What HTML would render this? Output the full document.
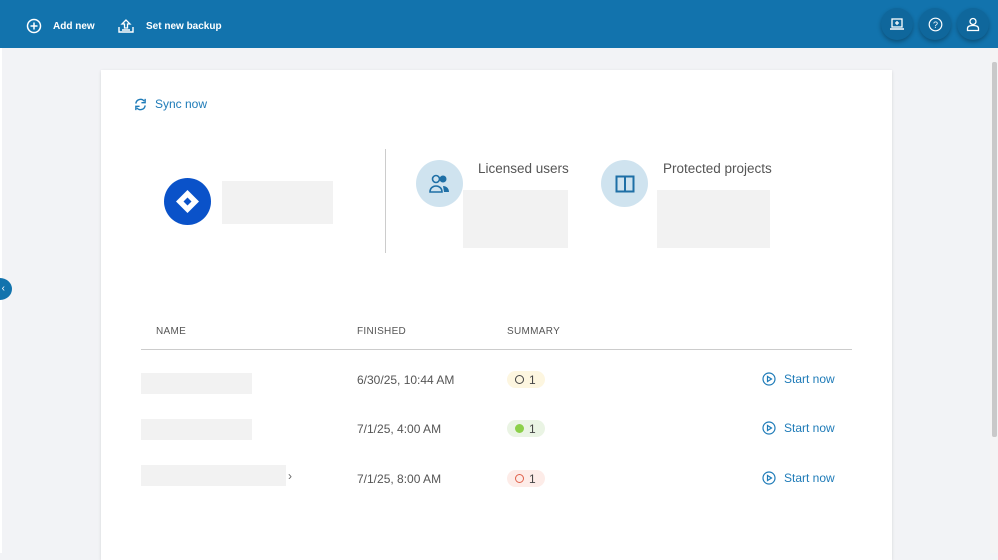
<!DOCTYPE html>
<html><head><meta charset="utf-8"><style>
*{box-sizing:border-box;margin:0;padding:0}
body{width:998px;height:553px;overflow:hidden;background:#f2f3f6;font-family:"Liberation Sans",sans-serif;position:relative;color:#444}
.top{position:absolute;left:0;top:0;width:998px;height:48px;background:#1273ad}
.tb{position:absolute;top:2px;height:48px;display:flex;align-items:center;color:#fff;font-size:10px;font-weight:bold}
.rc{position:absolute;top:8px;width:32px;height:32px;border-radius:50%;background:#0f679c;box-shadow:0 2px 4px rgba(0,0,0,.3);display:flex;align-items:center;justify-content:center}
.card{position:absolute;left:101px;top:70px;width:791px;height:490px;background:#fff;box-shadow:0 1px 3px rgba(0,0,0,.12)}
.blur{position:absolute;background:#f2f2f2}
.ab{position:absolute}
.hd{position:absolute;top:326px;font-size:10px;color:#555;letter-spacing:.3px}
.dt{position:absolute;font-size:12px;color:#555}
.pill{position:absolute;left:507px;width:38px;height:17px;border-radius:9px;font-size:12px;display:flex;align-items:center;padding-left:8px;gap:5px;color:#444}
.st{position:absolute;left:762px;font-size:12px;color:#1e7bb8;display:flex;align-items:center;gap:8px}
</style></head><body>
<div class="top"></div>
<div class="tb" style="left:26px"><svg width="16" height="16" viewBox="0 0 16 16"><circle cx="8" cy="8" r="6.5" fill="none" stroke="#fff" stroke-width="1.5"/><path d="M8 4.5v7M4.5 8h7" stroke="#fff" stroke-width="1.5"/></svg><span style="margin-left:11px">Add new</span></div>
<div class="tb" style="left:117px"><svg width="18" height="16" viewBox="0 0 18 16"><path d="M2 9v5h14V9M5 12h8" fill="none" stroke="#fff" stroke-width="1.4"/><path d="M9 2l-4 4h2.5v4h3V6H13z" fill="none" stroke="#fff" stroke-width="1.3"/></svg><span style="margin-left:11px">Set new backup</span></div>
<div class="rc" style="left:881px"><svg width="14" height="13" viewBox="0 0 14 13"><rect x="2" y="1" width="10" height="8" fill="none" stroke="#fff" stroke-width="1.3"/><path d="M7 3v4M5 5h4" stroke="#fff" stroke-width="1.3"/><path d="M0 11h14" stroke="#fff" stroke-width="1.5"/></svg></div>
<div class="rc" style="left:919px"><svg width="15" height="15" viewBox="0 0 15 15"><circle cx="7.5" cy="7.5" r="6.3" fill="none" stroke="#fff" stroke-width="1.2"/><text x="7.5" y="11" text-anchor="middle" font-size="9" fill="#fff" font-family="Liberation Sans">?</text></svg></div>
<div class="rc" style="left:957px"><svg width="14" height="15" viewBox="0 0 14 15"><circle cx="7" cy="4.5" r="3" fill="none" stroke="#fff" stroke-width="1.3"/><path d="M1.5 13.5v-2c0-2 2-3 5.5-3s5.5 1 5.5 3v2z" fill="none" stroke="#fff" stroke-width="1.3"/></svg></div>
<div style="position:absolute;left:0;top:48px;width:2px;height:505px;background:#fff"></div>
<div style="position:absolute;left:-12px;top:278px;width:24px;height:22px;border-radius:50%;background:#1273ad;color:#fff;font-size:10px;line-height:22px;text-align:right;padding-right:7px">‹</div>
<div style="position:absolute;left:990px;top:48px;width:8px;height:505px;background:#f4f4f4"></div>
<div style="position:absolute;left:992px;top:62px;width:5px;height:375px;background:#c9c9c9;border-radius:2px"></div>
<div class="card">
<div class="ab" style="left:33px;top:27px;display:flex;align-items:center;gap:8px;font-size:12px;color:#1e7bb8"><svg width="13" height="13" viewBox="0 0 14 14"><path d="M2 6A5 5 0 0 1 11 3.5M12 8A5 5 0 0 1 3 10.5" fill="none" stroke="#1e7bb8" stroke-width="1.5"/><path d="M12 1v4H8M2 13V9h4" fill="none" stroke="#1e7bb8" stroke-width="1.5"/></svg>Sync now</div>
<div class="ab" style="left:63px;top:108px;width:47px;height:47px;border-radius:50%;background:#0a52c9"><svg width="47" height="47" viewBox="0 0 47 47"><path d="M23.5 12L35 23.5 23.5 35 12 23.5z" fill="#fff"/><path d="M23.5 19.5l4 4-4 4-4-4z" fill="#0a52c9"/></svg></div>
<div class="blur" style="left:121px;top:111px;width:111px;height:43px"></div>
<div class="ab" style="left:284px;top:79px;width:1px;height:104px;background:#ccc"></div>
<div class="ab" style="left:315px;top:90px;width:47px;height:47px;border-radius:50%;background:#cfe3ef;display:flex;align-items:center;justify-content:center"><svg width="24" height="20" viewBox="0 0 24 20"><circle cx="8" cy="5" r="3.5" fill="none" stroke="#1e6fa6" stroke-width="1.6"/><circle cx="15" cy="5" r="3.5" fill="#1e6fa6"/><path d="M2 18c0-4 3-6 6-6s6 2 6 6z" fill="none" stroke="#1e6fa6" stroke-width="1.6"/><path d="M15 12c3 0 6 2 6 6h-5" fill="#1e6fa6"/></svg></div>
<div class="ab" style="left:377px;top:91px;font-size:13.5px;color:#555">Licensed users</div>
<div class="blur" style="left:362px;top:120px;width:105px;height:58px"></div>
<div class="ab" style="left:500px;top:90px;width:47px;height:47px;border-radius:50%;background:#cfe3ef;display:flex;align-items:center;justify-content:center"><svg width="20" height="18" viewBox="0 0 20 18"><rect x="1.5" y="1.5" width="17" height="15" fill="none" stroke="#1e6fa6" stroke-width="2"/><path d="M10 1.5v15" stroke="#1e6fa6" stroke-width="2"/></svg></div>
<div class="ab" style="left:562px;top:91px;font-size:13.5px;color:#555">Protected projects</div>
<div class="blur" style="left:556px;top:120px;width:113px;height:58px"></div>
<div class="hd" style="left:55px;top:256px">NAME</div>
<div class="hd" style="left:256px;top:256px">FINISHED</div>
<div class="hd" style="left:406px;top:256px">SUMMARY</div>
<div class="ab" style="left:40px;top:279px;width:711px;height:1px;background:#ccc"></div>
<div class="blur" style="left:40px;top:303px;width:111px;height:21px"></div>
<div class="blur" style="left:40px;top:349px;width:111px;height:21px"></div>
<div class="blur" style="left:40px;top:395px;width:145px;height:21px"></div>
<div class="ab" style="left:187px;top:399px;font-size:12px;color:#666">›</div>
<div class="dt" style="left:256px;top:303px">6/30/25, 10:44 AM</div>
<div class="dt" style="left:256px;top:352px">7/1/25, 4:00 AM</div>
<div class="dt" style="left:256px;top:402px">7/1/25, 8:00 AM</div>
</div>
<div class="pill" style="top:371px;background:#fdf6e0"><span style="width:9px;height:9px;border:1.3px solid #444;border-radius:50%"></span>1</div>
<div class="pill" style="top:420px;background:#eaf4e4"><span style="width:9px;height:9px;background:#8cd04a;border-radius:50%"></span>1</div>
<div class="pill" style="top:470px;background:#fdece8"><span style="width:9px;height:9px;border:1.3px solid #e0604a;border-radius:50%"></span>1</div>
<div class="st" style="top:372px"><svg width="14" height="14" viewBox="0 0 14 14"><circle cx="7" cy="7" r="6" fill="none" stroke="#1e7bb8" stroke-width="1.2"/><path d="M5.5 4.5v5l4-2.5z" fill="none" stroke="#1e7bb8" stroke-width="1.2"/></svg>Start now</div>
<div class="st" style="top:421px"><svg width="14" height="14" viewBox="0 0 14 14"><circle cx="7" cy="7" r="6" fill="none" stroke="#1e7bb8" stroke-width="1.2"/><path d="M5.5 4.5v5l4-2.5z" fill="none" stroke="#1e7bb8" stroke-width="1.2"/></svg>Start now</div>
<div class="st" style="top:471px"><svg width="14" height="14" viewBox="0 0 14 14"><circle cx="7" cy="7" r="6" fill="none" stroke="#1e7bb8" stroke-width="1.2"/><path d="M5.5 4.5v5l4-2.5z" fill="none" stroke="#1e7bb8" stroke-width="1.2"/></svg>Start now</div>
</body></html>
